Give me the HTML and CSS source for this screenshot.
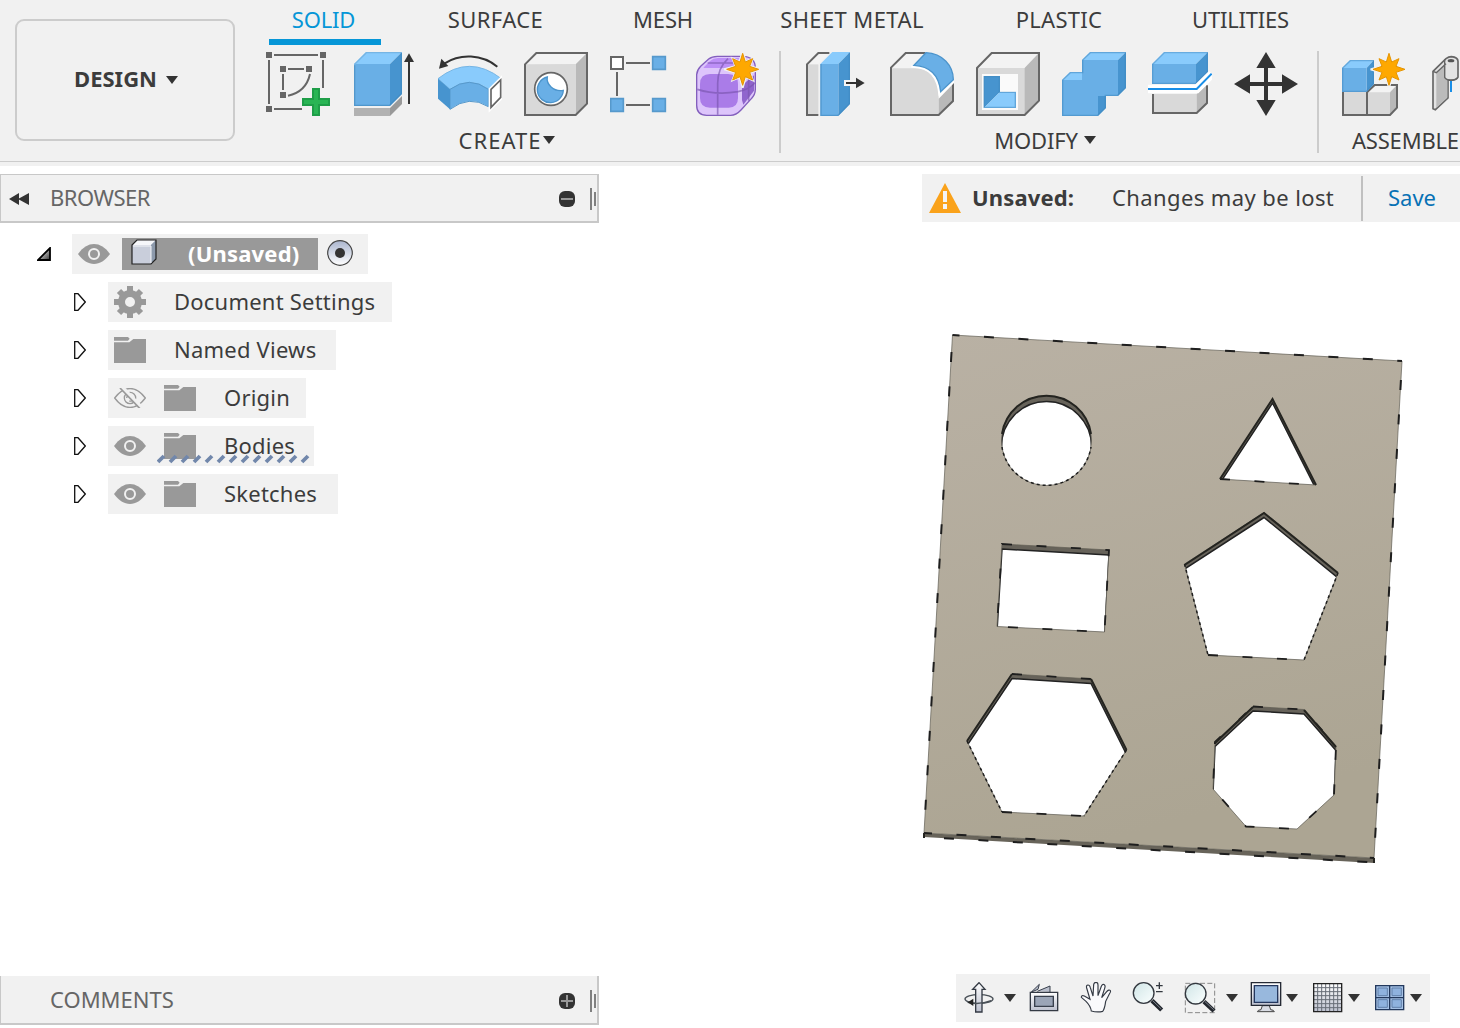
FILE: index.html
```html
<!DOCTYPE html>
<html lang="en">
<head>
<meta charset="utf-8">
<title>Design workspace</title>
<link rel="stylesheet" href="styles.css">
</head>
<body>
<svg class="defs" aria-hidden="true">
  <defs>
    <linearGradient id="steel" x1="0" y1="0" x2="0" y2="1"><stop offset="0" stop-color="#fff"/><stop offset="1" stop-color="#bcc0ce"/></linearGradient>
    <linearGradient id="lens" x1="0" y1="0" x2="1" y2="1"><stop offset="0" stop-color="#d0e5e6"/><stop offset="1" stop-color="#fbffff"/></linearGradient>
    <linearGradient id="radio" x1="0" y1="0" x2="0" y2="1"><stop offset="0" stop-color="#aab5ce"/><stop offset="1" stop-color="#fff"/></linearGradient>
    <linearGradient id="corner" x1="0" y1="0" x2="1" y2="1"><stop offset="0.2" stop-color="#eee"/><stop offset="1" stop-color="#333"/></linearGradient>
    <symbol id="eye" viewBox="0 0 96 60"><path d="M0 30C28-10 68-10 96 30C68 70 28 70 0 30Z" fill="#999"/><circle cx="48" cy="30" r="15" fill="#999" stroke="#f1f1f1" stroke-width="6"/></symbol>
    <symbol id="folder" viewBox="0 0 96 78"><path d="M0 0H42L47 5L42 11H0Z M0 16H46L58 6H96V78H0Z" fill="#999"/></symbol>
    <symbol id="twist" viewBox="0 0 12 18"><path d="M.7.7H4L11.3 9L4 17.3H.7Z" fill="#fff" stroke="#111" stroke-width="1.3"/></symbol>
    <symbol id="caret" viewBox="0 0 12 8"><path d="M0 0H12L6 8Z" fill="#333"/></symbol>
    <symbol id="star" viewBox="-56 -56 112 112"><path d="M0-50L8-21L28-30L20-9L50 0L20 9L28 30L8 21L0 50L-8 21L-28 30L-20 9L-50 0L-20-9L-28-30L-8-21Z" stroke="#f1f1f1" stroke-width="9" fill="#f1f1f1"/><path d="M0-48L8-22L30-32L21-9L48 0L21 9L30 32L8 22L0 48L-8 22L-30 32L-21 9L-48 0L-21-9L-30-32L-8-22Z" fill="#fea800" stroke="#e69400" stroke-width="3"/></symbol>
  </defs>
</svg>

<header class="toolbar">
  <button class="workspace">DESIGN <svg class="caret"><use href="#caret"/></svg></button>
  <div class="ribbon">
    <nav class="tabs">
      <a class="tab active">SOLID</a><a class="tab loose">SURFACE</a><a class="tab">MESH</a><a class="tab loose">SHEET METAL</a><a class="tab plastic">PLASTIC</a><a class="tab">UTILITIES</a>
    </nav>
    <div class="groups">
      <section class="group">
        <div class="tools">
          <svg viewBox="0 0 192 192"><path d="M24 9H156M9 24V156M171 24V108M24 171H108M66 51H114M51 66V114M132 66C124 102 100 124 66 131" fill="none" stroke="#666" stroke-width="6"/><path d="M0 0h18v18H0zM162 0h18v18h-18zM0 162h18v18H0zM42 42h18v18H42zM120 42h18v18h-18zM42 120h18v18H42z" fill="#666"/><path d="M141 111H159V141H189V159H159V189H141V159H111V141H141Z" fill="#29b554" stroke="#1e9e48" stroke-width="6"/></svg>
          <svg viewBox="0 0 192 192"><path d="M6 36L42 0H150L114 36Z" fill="#89cbfc"/><path d="M114 36L150 0V126L114 162Z" fill="#4794cf"/><path d="M6 36H114V162H6Z" fill="#69afe6"/><path d="M8 160V37L43 2H148" fill="none" stroke="#76b5e4" stroke-width="4"/><path d="M8 40V160H113L148 125V3" fill="none" stroke="#4088bf" stroke-opacity=".65" stroke-width="4"/><path d="M6 168H114V192H6Z" fill="#b2b2b2"/><path d="M114 168L150 132V156L114 192Z" fill="#999"/><path d="M171 156V24" stroke="#333" stroke-width="6"/><path d="M156 30L171 4L186 30Z" fill="#333"/></svg>
          <svg viewBox="0 0 192 192"><path d="M0 80Q94 6 190 80L154 112Q94 70 36 112Z" fill="#89cbfc" stroke="#76b5e4" stroke-width="3"/><path d="M36 112Q94 70 151 112V164Q94 128 36 172Z" fill="#69afe6" stroke="#5699cc" stroke-width="3"/><path d="M0 80L36 112V172L0 140Z" fill="#4794cf"/><path d="M188 82V138L158 168V112Z" fill="#fff" stroke="#fff" stroke-width="12"/><path d="M188 84V136L159 166V112Z" fill="#fff" stroke="#666" stroke-width="5"/><path d="M178 44C132 6 66 4 20 34" fill="none" stroke="#333" stroke-width="6"/><path d="M3 50L10 20L31 42Z" fill="#333"/></svg>
          <svg viewBox="0 0 192 192"><path d="M3 37L37 3H189V155L155 189H3Z" fill="#d9d9d9"/><path d="M3 37L37 3H189L156 36Z" fill="#f3f3f3"/><path d="M156 36L189 3V155L156 189Z" fill="#b9b9b9"/><path d="M3 37L37 3H189V155L155 189H3Z" fill="none" stroke="#666" stroke-width="6"/><circle cx="81" cy="111" r="49" fill="#fff" stroke="#666" stroke-width="5"/><path d="M70 75C66 96 88 120 118 115A39 39 0 1 1 70 75Z" fill="#69afe6" stroke="#4b94cc" stroke-width="4"/></svg>
          <svg viewBox="0 0 192 192"><path d="M48 33H120M21 60V132M48 159H120" stroke="#666" stroke-width="6"/><path d="M3 15h36v36H3z" fill="#fff" stroke="#666" stroke-width="6"/><path d="M128 14h38v38h-38zM2 140h38v38H2zM128 140h38v38h-38z" fill="#69afe6" stroke="#5699cc" stroke-width="5"/></svg>
          <svg viewBox="0 0 192 192"><path d="M2 68Q3 54 14 43L38 21Q48 13 64 13H140Q178 14 178 48V112Q178 128 166 140L135 174Q120 190 104 190H32Q2 190 2 160Z" fill="#ddc5fb" stroke="#835fbd" stroke-width="4"/><path d="M22 47L42 27Q52 18 66 18H130L112 48H34Q25 48 22 47Z" fill="#bd8ff7"/><path d="M42 66H96Q126 66 126 96V138Q126 167 98 167H42Q12 167 12 138V96Q12 66 42 66Z" fill="#aa7ce8"/><path d="M138 100L174 70V116L142 158Q136 144 138 130Z" fill="#9065cd"/><path d="M65 188V94Q65 48 96 20M4 112Q60 130 126 119Q160 112 177 92M35 33H120M158 55V146" fill="none" stroke="#7954ad" stroke-opacity=".65" stroke-width="5"/><use href="#star" x="84" y="-4" width="112" height="112"/></svg>
        </div>
        <div class="label create">CREATE <svg class="caret"><use href="#caret"/></svg></div>
      </section>
      <section class="group">
        <div class="tools">
          <svg viewBox="0 0 192 192"><path d="M9 37L43 3H76L43 37V189H9Z" fill="#f3f3f3"/><path d="M9 37H43V189H9Z" fill="#d9d9d9"/><path d="M76 3H43L9 37V189H43" fill="none" stroke="#666" stroke-width="6"/><path d="M49 36L85 0H138L103 36Z" fill="#89cbfc"/><path d="M103 36L138 0V156L103 192Z" fill="#4794cf"/><path d="M49 36H103V192H49Z" fill="#69afe6"/><path d="M51 36V190H102L136 155V3" fill="none" stroke="#4088bf" stroke-opacity=".6" stroke-width="4"/><path d="M120 93H165" stroke="#f4f4f4" stroke-width="18"/><path d="M126 93H160" stroke="#333" stroke-width="6"/><path d="M156 77L182 93L156 109Z" fill="#333"/></svg>
          <svg viewBox="0 0 192 192"><path d="M3 49L47 3H106L72 40L146 132L189 90V147L146 189H3Z" fill="#f3f3f3"/><path d="M3 49H72Q144 50 146 132V189H3Z" fill="#d9d9d9"/><path d="M146 132L189 90V147L146 189Z" fill="#b9b9b9"/><path d="M106 3H47L3 47V189H146L189 147V90" fill="none" stroke="#666" stroke-width="6"/><path d="M64 44Q143 42 149 132L192 88" fill="none" stroke="#fff" stroke-width="7"/><path d="M72 40L108 2C158 4 190 42 190 83L152 119Q144 44 72 40Z" fill="#69afe6" stroke="#4b94cc" stroke-width="4"/></svg>
          <svg viewBox="0 0 192 192"><path d="M3 48L47 3H189V146L146 189H3Z" fill="#d9d9d9"/><path d="M3 48L47 3H189L146 48Z" fill="#f3f3f3"/><path d="M146 48L189 3V146L146 189Z" fill="#b9b9b9"/><path d="M3 48L47 3H189V146L146 189H3Z" fill="none" stroke="#666" stroke-width="6"/><path d="M18 66H126V174H18Z" fill="#fafafa"/><path d="M24 72H72V120L24 168Z" fill="#4794cf"/><path d="M24 168L72 120H120V168Z" fill="#89cbfc"/><path d="M24 168V74H70V121H118V166H24" fill="none" stroke="#4088bf" stroke-opacity=".55" stroke-width="4"/></svg>
          <svg viewBox="0 0 192 192"><path d="M0 84L24 60H60V84ZM60 24L84 0H192L168 24Z" fill="#89cbfc"/><path d="M168 24L192 0V108L168 132ZM108 132H132V168L108 192Z" fill="#4794cf"/><path d="M0 84H60V24H168V132H108V192H0Z" fill="#69afe6"/><path d="M2 84L25 62H62V24L85 2H190V107L167 130H130V167L107 190H2Z" fill="none" stroke="#4088bf" stroke-opacity=".55" stroke-width="4"/></svg>
          <svg viewBox="0 0 192 192"><path d="M12 36L48 0H180L144 36Z" fill="#89cbfc"/><path d="M144 36L180 0V60L144 96Z" fill="#4794cf"/><path d="M12 36H144V96H12Z" fill="#69afe6"/><path d="M14 94V37L49 2H178V59L143 94Z" fill="none" stroke="#4088bf" stroke-opacity=".45" stroke-width="4"/><path d="M15 126H146V183H15Z" fill="#d9d9d9"/><path d="M146 126L177 98V153L146 183Z" fill="#b9b9b9"/><path d="M15 126V183H146L177 153V100" fill="none" stroke="#666" stroke-width="6"/><path d="M0 111H146L192 66" fill="none" stroke="#fff" stroke-width="25"/><path d="M0 111H146L191 65" fill="none" stroke="#198ee7" stroke-width="6"/></svg>
          <svg viewBox="0 0 192 192"><path d="M96 40V150M40 96H150" stroke="#333" stroke-width="12"/><path d="M96 0L67 48H125ZM96 192L67 144H125ZM0 96L48 67V125ZM192 96L144 67V125Z" fill="#333"/></svg>
        </div>
        <div class="label">MODIFY <svg class="caret far"><use href="#caret"/></svg></div>
      </section>
      <section class="group last">
        <div class="tools">
          <svg viewBox="0 0 192 192" overflow="visible"><path d="M9 120H150V189H9Z" fill="#d9d9d9"/><path d="M81 121L104 99H171L150 121Z" fill="#f3f3f3"/><path d="M150 121L171 99V167L150 189Z" fill="#b9b9b9"/><path d="M9 120V189H150L171 167V99H104L81 121V189" fill="none" stroke="#666" stroke-width="6"/><path d="M6 48L30 24H102L80 48Z" fill="#89cbfc"/><path d="M80 48L102 24V96L80 120Z" fill="#4794cf"/><path d="M6 48H80V120H6Z" fill="#69afe6"/><path d="M8 48L31 26H100V96L79 118H8Z" fill="none" stroke="#4088bf" stroke-opacity=".5" stroke-width="4"/><use href="#star" x="91" y="-4" width="112" height="112"/></svg>
          <svg viewBox="0 0 192 192"><path d="M75 60V120" stroke="#198ee7" stroke-width="6"/><path d="M21 58L60 20Q68 14 76 14Q96 16 96 28V75Q92 86 66 84V138L28 173L21 170Z" fill="#e3e3e3" stroke="#666" stroke-width="5"/><path d="M31 60L58 34V80Q62 84 64 84V136L31 168Z" fill="#bbb"/><path d="M21 58L31 62L60 35M56 22V76Q60 84 74 85Q92 84 96 76" fill="none" stroke="#666" stroke-width="4"/><ellipse cx="75" cy="26" rx="10" ry="5" fill="#555"/></svg>
        </div>
        <div class="label">ASSEMBLE</div>
      </section>
    </div>
  </div>
</header>

<main class="workarea">
  <aside class="side">
    <div class="panel">
      <svg class="collapse" viewBox="0 0 20 12"><path d="M10 0V12L0 6ZM20 0V12L9 6Z" fill="#333"/></svg>
      <span class="panel-title tight">BROWSER</span>
      <svg class="round" viewBox="0 0 16 16"><rect width="16" height="16" rx="6" fill="#333"/><path d="M2 8H14" stroke="#999" stroke-width="2"/></svg>
      <i class="grip"></i>
    </div>
    <ul class="tree">
      <li class="root"><svg class="open" viewBox="0 0 14 14"><path d="M13 1V13H1Z" fill="url(#corner)" stroke="#000" stroke-width="1.8"/></svg>
        <div class="node w-root"><svg class="eye"><use href="#eye"/></svg>
          <div class="selected"><svg class="body" viewBox="0 0 26 26"><path d="M1 6L6 1H25V20L20 25H1Z" fill="#c9cedb"/><path d="M1 6L6 1H25L20 6Z" fill="#f6f7fa"/><path d="M20 6L25 1V20L20 25Z" fill="#8d9aac"/><path d="M1 6L6 1H25V20L20 25H1Z" fill="none" stroke="#222" stroke-width="1.2"/><path d="M2 7H20V24" fill="none" stroke="#f4f5f8"/></svg><b>(Unsaved)</b></div>
          <svg class="radio" viewBox="0 0 26 26"><circle cx="13" cy="13" r="12.3" fill="url(#radio)" stroke="#444" stroke-width="1.2"/><circle cx="13" cy="13" r="5" fill="#333"/></svg></div></li>
      <li><svg class="twist"><use href="#twist"/></svg><div class="node w-doc"><svg class="gear" viewBox="-16 -16 32 32"><g stroke="#999" stroke-width="6"><path d="M0-16V16M-16 0H16M-11-11L11 11M-11 11L11-11"/></g><circle r="8.5" fill="#f1f1f1" stroke="#999" stroke-width="7"/></svg><span class="text">Document Settings</span></div></li>
      <li><svg class="twist"><use href="#twist"/></svg><div class="node w-views"><svg class="folder"><use href="#folder"/></svg><span class="text">Named Views</span></div></li>
      <li><svg class="twist"><use href="#twist"/></svg><div class="node w-origin"><svg class="eye" viewBox="0 0 96 60"><path d="M2 30C30-8 66-8 94 30C66 68 30 68 2 30Z" fill="none" stroke="#999" stroke-width="4"/><circle cx="48" cy="30" r="17" fill="none" stroke="#999" stroke-width="4"/><path d="M38 30Q40 18 50 22M57 30Q55 42 46 39" fill="none" stroke="#999" stroke-width="4"/><path d="M22-5L82 58" stroke="#f1f1f1" stroke-width="11"/><path d="M18 0L78 62" stroke="#999" stroke-width="5"/></svg><svg class="folder second"><use href="#folder"/></svg><span class="text">Origin</span></div></li>
      <li><svg class="twist"><use href="#twist"/></svg><div class="node w-bodies"><svg class="eye"><use href="#eye"/></svg><svg class="folder second"><use href="#folder"/></svg><span class="text">Bodies</span><svg class="hatch" viewBox="0 0 153 10"><path d="M1 8L7 2M13 8L19 2M25 8L31 2M37 8L43 2M49 8L55 2M61 8L67 2M73 8L79 2M85 8L91 2M97 8L103 2M109 8L115 2M121 8L127 2M133 8L139 2M145 8L151 2" stroke="#7187ab" stroke-width="3.8"/></svg></div></li>
      <li><svg class="twist"><use href="#twist"/></svg><div class="node w-sketches"><svg class="eye"><use href="#eye"/></svg><svg class="folder second"><use href="#folder"/></svg><span class="text">Sketches</span></div></li>
    </ul>
    <div class="panel comments">
      <span class="panel-title">COMMENTS</span>
      <svg class="round" viewBox="0 0 16 16"><rect width="16" height="16" rx="6" fill="#333"/><path d="M2 8H14M8 2V14" stroke="#999" stroke-width="2"/></svg>
      <i class="grip"></i>
    </div>
  </aside>

  <section class="canvas">
    <div class="notice">
      <svg class="warn" viewBox="0 0 32 30"><path d="M16 0L32 30H0Z" fill="#faa21b"/><path d="M16 8V19M16 21V26" stroke="#f4f4f4" stroke-width="4"/></svg>
      <b>Unsaved:</b><span class="message">Changes may be lost</span><a class="save">Save</a>
    </div>
    <svg class="model" viewBox="600 222 860 752">
      <defs>
        <linearGradient id="plate" x1="0" y1="0" x2=".25" y2="1"><stop offset="0" stop-color="#b9b1a4"/><stop offset="1" stop-color="#aca593"/></linearGradient>
        <circle id="h1" cx="1046.5" cy="440.5" r="45"/>
        <path id="h2" d="M1272.500 399L1316 485L1220 479Z"/>
        <path id="h3" d="M1002 544L1109 550L1104.500 632L997 626.500Z"/>
        <path id="h4" d="M1264 512.500L1338 573L1304 660L1208 655L1184.500 564Z"/>
        <path id="h5" d="M1012 674L1091 679L1126.500 750L1084 816L1002 812L967 741Z"/>
        <path id="h6" d="M1253 706.500L1304 709.500L1336 746L1334 795L1297 829L1246 826.500L1213 789L1215 742Z"/>
        <clipPath id="c1"><use href="#h1"/></clipPath><clipPath id="c2"><use href="#h2"/></clipPath><clipPath id="c3"><use href="#h3"/></clipPath><clipPath id="c4"><use href="#h4"/></clipPath><clipPath id="c5"><use href="#h5"/></clipPath><clipPath id="c6"><use href="#h6"/></clipPath>
      </defs>
      <path d="M924 833L1374 858V863L924 837Z" fill="#68645a"/>
      <path d="M952.500 335L1402 361L1374 858L924 833Z" fill="url(#plate)"/>
      <g class="wall"><use href="#h1"/><use href="#h2"/><use href="#h3"/><use href="#h4"/><use href="#h5"/><use href="#h6"/></g>
      <g class="through">
        <g clip-path="url(#c1)"><use href="#h1" y="6"/></g><g clip-path="url(#c2)"><use href="#h2" y="4"/></g><g clip-path="url(#c3)"><use href="#h3" y="5"/></g><g clip-path="url(#c4)"><use href="#h4" y="5"/></g><g clip-path="url(#c5)"><use href="#h5" y="4.500"/></g><g clip-path="url(#c6)"><use href="#h6" y="4.500"/></g>
      </g>
      <g class="edge"><use href="#h1"/><use href="#h2"/><use href="#h3"/><use href="#h4"/><use href="#h5"/><use href="#h6"/><path d="M952.500 335L1402 361L1374 858M952.500 335L924 833M924 833L1374 858"/></g>
      <g class="dash"><path d="M952.500 335L1402 361" stroke-dashoffset="3"/><path d="M952.500 335L924 833" stroke-dashoffset="-17"/><path d="M1402 361L1374 858" stroke-dashoffset="-19"/><path d="M924 833L1374 858" stroke-dashoffset="2"/><path d="M924 837L1374 862.500" stroke-dashoffset="-20"/></g>
      <g class="dash hole"><use href="#h3"/><use href="#h6"/><path d="M1208 655H1208L1304 660M1002 812L1084 816M1220 479L1316 485M1012 674L1091 679"/></g>
      <g class="dash fine"><path d="M1338 573L1304 660M1184.500 564L1208 655M967 741L1002 812M1126.500 750L1084 816"/><path d="M1002 447A45 45 0 0 0 1091 447"/></g>
      <path class="dark" d="M1002 434A45 45 0 0 1 1091 434M1220 479L1272.500 399L1316 485M1184.500 565L1264 513L1338 573M967 741L1012 674M1091 679L1126.500 750M1215 743L1253 707M1304 710L1336 747M924 833V838M1374 858V863"/>
    </svg>
    <div class="navbar">
      <svg class="nav n-orbit" viewBox="0 0 96 96"><ellipse cx="48" cy="51" rx="42" ry="13" fill="none" stroke="#495057" stroke-width="4"/><path d="M38 90V22H29L48 2L66 22H57V90Z" fill="url(#steel)" stroke="#343a44" stroke-width="4"/><path d="M14 61Q48 70 84 56" fill="none" stroke="#495057" stroke-width="4"/><path d="M14 61L31 50V72Z" fill="#222"/></svg>
      <svg class="caret"><use href="#caret"/></svg>
      <svg class="nav n-look" viewBox="0 0 96 96"><path d="M10 30L34 7L30 22ZM28 28L66 12V30" fill="#b9becb" stroke="#39404d" stroke-width="3"/><path d="M7 31H89V86H7Z" fill="url(#steel)" stroke="#343a44" stroke-width="4"/><path d="M20 43H76V73H20Z" fill="#9ba5b7" stroke="#39404d" stroke-width="4"/></svg>
      <svg class="nav n-pan" viewBox="0 0 96 96"><path d="M34 87Q32 72 18 58L4 46Q4 39 13 42L30 52L20 18Q18 9 24 9Q29 9 31 17L39 42L41 8Q42 1 48 1Q54 1 54 9L54 41L64 13Q68 5 73 8Q77 11 74 19L65 47L80 29Q87 21 91 26Q93 29 88 36L77 58Q74 81 68 88Q52 92 34 87Z" fill="#fafafc" stroke="#343a44" stroke-width="3.500"/></svg>
      <svg class="nav n-zoom" viewBox="0 0 96 96"><path d="M60 56L89 84" stroke="#22262d" stroke-width="13"/><path d="M62 56L88 81" stroke="#7d838c" stroke-width="3"/><circle cx="35" cy="33" r="31" fill="url(#lens)" stroke="#33383f" stroke-width="4"/><path d="M72 11H92M82 1V21M72 29H92" stroke="#33383f" stroke-width="4"/></svg>
      <svg class="nav n-window" viewBox="0 0 96 96"><path d="M4 4H92V92H4Z" fill="none" stroke="#888" stroke-width="3" stroke-dasharray="15 7"/><path d="M60 59L90 87" stroke="#22262d" stroke-width="13"/><path d="M63 59L89 83" stroke="#7d838c" stroke-width="3"/><circle cx="35" cy="35" r="31" fill="url(#lens)" stroke="#33383f" stroke-width="4"/></svg>
      <svg class="caret c-window"><use href="#caret"/></svg>
      <svg class="nav n-display" viewBox="0 0 96 96"><path d="M37 71H58L62 83Q72 84 73 89H22Q23 84 33 83Z" fill="#d9dce4" stroke="#444" stroke-width="3"/><path d="M4 2H92V70H4Z" fill="url(#steel)" stroke="#252a35" stroke-width="4"/><path d="M13 11H83V61H13Z" fill="#98b8dd" stroke="#24375e" stroke-width="4"/></svg>
      <svg class="caret c-near"><use href="#caret"/></svg>
      <svg class="nav n-grid" viewBox="0 0 96 96"><path d="M5 5H89V89H5Z" fill="url(#steel)"/><path d="M17 5V89M29 5V89M41 5V89M53 5V89M65 5V89M77 5V89M5 17H89M5 29H89M5 41H89M5 53H89M5 65H89M5 77H89" stroke="#666c76" stroke-width="3"/><path d="M5 5H89V89H5Z" fill="none" stroke="#222" stroke-width="4"/></svg>
      <svg class="caret c-near"><use href="#caret"/></svg>
      <svg class="nav n-quad" viewBox="0 0 96 96"><path d="M5 11H89V83H5Z" fill="#a5c1e5" stroke="#23395d" stroke-width="4"/><path d="M47 11V83M5 47H89" stroke="#23395d" stroke-width="4"/><path d="M12 18H40V41H12ZM54 18H82V41H54ZM12 53H40V76H12ZM54 53H82V76H54Z" fill="#8fb2de" stroke="#6280aa" stroke-width="3"/></svg>
      <svg class="caret c-near"><use href="#caret"/></svg>
    </div>
  </section>
</main>
</body>
</html>
```
FILE: styles.css
```css
* { box-sizing: border-box; }
body { margin: 0; width: 1460px; height: 1028px; overflow: hidden; display: flex; flex-direction: column; background: #fff; color: #3c3c3c; font: 22px/30px "Noto Sans", sans-serif; }
svg { display: block; flex: none; }
.defs { position: absolute; width: 0; height: 0; }
.caret { width: 12px; height: 8px; }

.toolbar { height: 166px; flex: none; display: flex; background: linear-gradient(#ccc, #ccc) 0 161px / 100% 1px no-repeat #f1f1f1; overflow: hidden; }
.workspace { width: 220px; height: 122px; margin: 19px 0 0 15px; flex: none; border: 2px solid #ccc; border-radius: 9px; background: none; display: flex; align-items: center; justify-content: center; gap: 9px; padding: 0 0 4px 2px; color: #3c3c3c; font: bold 22px/30px "Noto Sans", sans-serif; }
.workspace .caret { margin-top: 4px; }
.ribbon { margin-left: 31px; flex: none; }
.tabs { display: grid; grid-template-columns: 112px 229px 106px 272px 142px 221px; height: 45px; margin-left: 3px; }
.tab { text-align: center; padding: 4px 0 0; letter-spacing: -0.2px; }
.tab.active { color: #0696d7; border-bottom: 6px solid #0696d7; padding-right: 3px; }
.tab.loose { letter-spacing: 0.4px; }
.tab.plastic { letter-spacing: 0.3px; }
.groups { display: flex; margin-top: 6px; }
.group { height: 102px; padding-right: 19px; margin-right: 23px; border-right: 2px solid #ccc; flex: none; }
.group.last { border: 0; margin: 0 0 0 -2px; padding: 0; }
.tools { display: flex; gap: 22px; padding-top: 1px; }
.tools svg { width: 64px; height: 64px; }
.label { display: flex; justify-content: center; align-items: center; gap: 3px; padding-right: 12px; margin-top: 9px; letter-spacing: -0.2px; }
.label .caret { margin-top: 0; }
.label .far { margin-left: 3px; }
.label.create { letter-spacing: 1px; gap: 2px; }
.last .label { padding: 0; justify-content: flex-start; margin-left: 12px; }

.workarea { display: flex; flex: 1; min-height: 0; padding-top: 8px; }
.side { width: 599px; display: flex; flex-direction: column; flex: none; }
.panel { height: 49px; display: flex; align-items: center; padding: 0 1px 0 8px; border: solid #c8c8c8; border-width: 1px 2px 2px 1px; background: #f1f1f1; color: #666; flex: none; }
.collapse { width: 20px; height: 12px; margin-top: 2px; }
.panel-title { margin: -2px 0 0 21px; flex: 1; }
.panel-title.tight { letter-spacing: -0.5px; }
.round { width: 16px; height: 16px; margin-top: 2px; }
.grip { width: 6px; height: 22px; margin-left: 15px; margin-top: 2px; background: linear-gradient(#808080, #808080) 0 0 / 2px 22px no-repeat, linear-gradient(#808080, #808080) 4px 4px / 2px 14px no-repeat; }
.comments { margin-top: auto; margin-bottom: 3px; border-top: 0; padding-left: 28px; }

.tree { list-style: none; margin: 11px 0 0; padding: 0; display: flex; flex-direction: column; gap: 8px; }
.tree li { display: flex; align-items: center; height: 40px; padding-left: 74px; }
.tree .root { padding-left: 37px; }
.open { width: 14px; height: 14px; }
.twist { width: 12px; height: 18px; }
.node { height: 40px; margin-left: 22px; padding-left: 6px; display: flex; align-items: center; background: #f1f1f1; position: relative; }
.root .node { margin-left: 21px; }
.w-root { width: 296px; } .w-doc { width: 284px; } .w-views { width: 228px; } .w-origin { width: 198px; } .w-bodies { width: 206px; } .w-sketches { width: 230px; }
.eye { width: 32px; height: 20px; }
.folder { width: 32px; height: 26px; }
.gear { width: 32px; height: 32px; }
.second { margin-left: 18px; }
.text { margin: -2px 0 0 28px; white-space: nowrap; letter-spacing: 0.22px; }
.selected { width: 196px; height: 32px; margin-left: 12px; background: #999; color: #fff; display: flex; align-items: center; padding-left: 9px; }
.body { width: 26px; height: 26px; margin-top: -4px; }
.selected b { margin: -2px 0 0 31px; letter-spacing: 0.2px; }
.radio { width: 26px; height: 26px; margin: -2px 0 0 9px; }
.hatch { position: absolute; left: 49px; top: 28px; width: 153px; height: 10px; }

.canvas { width: 860px; margin-left: 1px; flex: none; display: flex; flex-direction: column; }
.notice { height: 48px; width: 538px; margin-left: 322px; background: #f1f1f1; display: flex; align-items: center; padding-left: 7px; white-space: nowrap; }
.warn { width: 32px; height: 30px; margin-top: -1px; }
.notice b { width: 140px; margin: -2px 0 0 11px; letter-spacing: 0.15px; }
.message { width: 249px; margin-top: -2px; letter-spacing: 0.4px; }
.save { color: #0871b5; border-left: 2px solid #c0c0c0; height: 45px; padding: 6px 0 0 25px; }
.model { width: 860px; height: 752px; }
.wall { fill: #67635a; }
.through { fill: #fff; stroke: #222; stroke-width: 1.5; }
.edge { fill: none; stroke: #625f55; stroke-width: 1; stroke-opacity: .7; }
.dash { fill: none; stroke: #1e1e1e; stroke-width: 2; stroke-dasharray: 10 24.5; }
.hole { stroke-width: 1.8; }
.fine { stroke-dasharray: 3 3; stroke-width: 1.5; }
.dark { fill: none; stroke: #242420; stroke-width: 2; }

.navbar { width: 474px; height: 48px; margin-left: 356px; flex: none; background: #f1f1f1; display: flex; align-items: center; padding-left: 7px; }
.nav { width: 32px; height: 32px; }
.navbar .caret { margin-left: 9px; }
.n-look { margin-left: 12px; }
.n-pan, .n-zoom, .n-window { margin-left: 20px; }
.navbar .c-window { margin-left: 10px; }
.n-display { margin-left: 12px; }
.navbar .c-near { margin-left: 4px; }
.n-grid, .n-quad { margin-left: 14px; }
```
